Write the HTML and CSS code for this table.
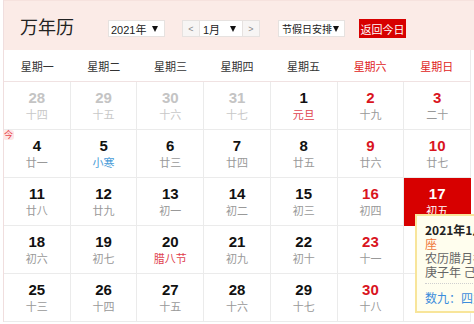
FILE: index.html
```html
<!DOCTYPE html>
<html lang="zh-CN">
<head>
<meta charset="utf-8">
<title>万年历</title>
<link rel="stylesheet" href="styles.css">
</head>
<body>
<div class="cal">
  <div class="head">
    <div class="title">万年历</div>
    <div class="ctrls">
      <div class="sel sel-year">2021年</div>
      <div class="month-group">
        <div class="nav">&lt;</div>
        <div class="sel sel-month">1月</div>
        <div class="nav">&gt;</div>
      </div>
      <div class="sel sel-hol">节假日安排</div>
      <div class="today-btn">返回今日</div>
    </div>
  </div>
  <div class="week">
    <div>星期一</div><div>星期二</div><div>星期三</div><div>星期四</div><div>星期五</div><div class="we">星期六</div><div class="we">星期日</div>
  </div>
  <div class="days">
    <div class="cell other"><b>28</b><span>十四</span></div>
    <div class="cell other"><b>29</b><span>十五</span></div>
    <div class="cell other"><b>30</b><span>十六</span></div>
    <div class="cell other"><b>31</b><span>十七</span></div>
    <div class="cell"><b>1</b><span class="fest">元旦</span></div>
    <div class="cell weekend"><b>2</b><span>十九</span></div>
    <div class="cell weekend"><b>3</b><span>二十</span></div>

    <div class="cell"><i class="jin">今</i><b>4</b><span>廿一</span></div>
    <div class="cell"><b>5</b><span class="term">小寒</span></div>
    <div class="cell"><b>6</b><span>廿三</span></div>
    <div class="cell"><b>7</b><span>廿四</span></div>
    <div class="cell"><b>8</b><span>廿五</span></div>
    <div class="cell weekend"><b>9</b><span>廿六</span></div>
    <div class="cell weekend"><b>10</b><span>廿七</span></div>

    <div class="cell"><b>11</b><span>廿八</span></div>
    <div class="cell"><b>12</b><span>廿九</span></div>
    <div class="cell"><b>13</b><span>初一</span></div>
    <div class="cell"><b>14</b><span>初二</span></div>
    <div class="cell"><b>15</b><span>初三</span></div>
    <div class="cell weekend"><b>16</b><span>初四</span></div>
    <div class="cell weekend selected"><b>17</b><span>初五</span></div>

    <div class="cell"><b>18</b><span>初六</span></div>
    <div class="cell"><b>19</b><span>初七</span></div>
    <div class="cell"><b>20</b><span class="fest">腊八节</span></div>
    <div class="cell"><b>21</b><span>初九</span></div>
    <div class="cell"><b>22</b><span>初十</span></div>
    <div class="cell weekend"><b>23</b><span>十一</span></div>
    <div class="cell weekend"><b>24</b><span>十二</span></div>

    <div class="cell"><b>25</b><span>十三</span></div>
    <div class="cell"><b>26</b><span>十四</span></div>
    <div class="cell"><b>27</b><span>十五</span></div>
    <div class="cell"><b>28</b><span>十六</span></div>
    <div class="cell"><b>29</b><span>十七</span></div>
    <div class="cell weekend"><b>30</b><span>十八</span></div>
    <div class="cell weekend"><b>31</b><span>十九</span></div>
  </div>
  <div class="tip">
    <div class="tip-main">
      <div class="tip-date">2021年1月17日 星期日 <em>摩羯</em></div>
      <div class="tip-star">座</div>
      <div class="tip-lunar">农历腊月初五</div>
      <div class="tip-lunar">庚子年 己丑月 丙午日</div>
    </div>
    <div class="tip-extra">数九：四九 第3天</div>
  </div>
</div>
</body>
</html>
```

FILE: styles.css
```css
* { box-sizing: border-box; }

html, body {
  margin: 0;
  padding: 0;
  background: #fff;
  overflow: hidden;
}

body {
  font-family: "Liberation Sans", "Noto Sans CJK SC", sans-serif;
  color: #333;
}

.cal {
  position: relative;
  margin-left: 3px;
  border-left: 1px solid #f0dede;
}

.head {
  height: 50px;
  background: #fbebe7;
  border-top: 1px solid #f6e2de;
  display: flex;
  align-items: center;
  padding-left: 16px;
}

.title {
  font-family: "Noto Sans CJK SC", sans-serif;
  font-size: 18px;
  color: #222;
}

.ctrls {
  display: flex;
  align-items: center;
  margin-left: 34px;
  margin-top: 6px;
}

.sel {
  height: 17px;
  border: 1px solid #e6e2e0;
  background: #fff;
  font-size: 11px;
  color: #222;
  white-space: nowrap;
  display: flex;
  align-items: center;
  justify-content: space-between;
  padding: 0 6px 0 2px;
}

.sel::after {
  content: "";
  flex: none;
  width: 0;
  height: 0;
  border-left: 3.5px solid transparent;
  border-right: 3.5px solid transparent;
  border-top: 6px solid #111;
}

.sel-year { width: 57px; }

.month-group {
  display: flex;
  margin-left: 17px;
}

.sel-month {
  width: 42px;
  border-left: none;
  border-right: none;
  padding-left: 3px;
}

.nav {
  width: 18px;
  height: 17px;
  border: 1px solid #e6e2e0;
  background: #f7f5f4;
  color: #888;
  font-size: 9px;
  display: flex;
  align-items: center;
  justify-content: center;
}

.sel-hol {
  width: 67px;
  margin-left: 18px;
  padding-left: 3px;
  padding-right: 5px;
  font-size: 10px;
}

.today-btn {
  margin-left: 14px;
  width: 47px;
  height: 19px;
  background: #d70000;
  color: #fff;
  font-size: 11px;
  white-space: nowrap;
  display: flex;
  align-items: center;
  justify-content: center;
}

.week {
  width: 467px;
  height: 32px;
  display: grid;
  grid-template-columns: repeat(7, 1fr);
  align-items: center;
  border-bottom: 1px solid #f0e2e2;
  border-right: 1px solid #ebebeb;
  font-size: 11px;
  color: #333;
  text-align: center;
}

.week .we { color: #e02323; }

.days {
  width: 467px;
  display: grid;
  grid-template-columns: repeat(7, 1fr);
  grid-auto-rows: 48px;
}

.cell {
  position: relative;
  border-right: 1px solid #ebebeb;
  border-bottom: 1px solid #ebebeb;
  display: flex;
  flex-direction: column;
  align-items: center;
  padding-top: 8px;
}

.cell b {
  font-size: 15px;
  line-height: 16px;
  font-weight: bold;
  color: #111;
}

.cell span {
  font-size: 11px;
  line-height: 16px;
  color: #999;
  font-family: "Noto Sans CJK SC", sans-serif;
}

.cell.other b { color: #c4c4c4; }
.cell.other span { color: #c8c8c8; }

.cell.weekend b { color: #d9141e; }

.cell span.fest { color: #e0414c; }
.cell span.term { color: #4b9dd8; }

.cell.selected {
  background: #d70000;
  border-color: #d70000;
}
.cell.selected b,
.cell.selected span { color: #fff; }

.jin {
  position: absolute;
  left: -1px;
  top: 0;
  width: 11px;
  height: 10px;
  font-style: normal;
  font-size: 9px;
  line-height: 10px;
  text-align: center;
  color: #e8484e;
  background: #fde6e6;
  border-radius: 3px;
  font-family: "Noto Sans CJK SC", sans-serif;
}

.tip {
  position: absolute;
  left: 411px;
  top: 214px;
  width: 210px;
  background: #fffeee;
  border: 2px solid #f8e59a;
  padding: 7px 8px 6px 8px;
  font-size: 12px;
  line-height: 14px;
  font-family: "Noto Sans CJK SC", sans-serif;
  white-space: nowrap;
  z-index: 5;
}

.tip-main {
  padding-bottom: 4px;
  border-bottom: 1px dotted #cfcfcf;
}

.tip-date {
  font-weight: bold;
  color: #222;
}

.tip-date em {
  font-style: normal;
  color: #f07a3c;
}

.tip-star { color: #f07a3c; }

.tip-lunar { color: #666; }

.tip-extra {
  padding-top: 7px;
  color: #3c8ddc;
}
```
